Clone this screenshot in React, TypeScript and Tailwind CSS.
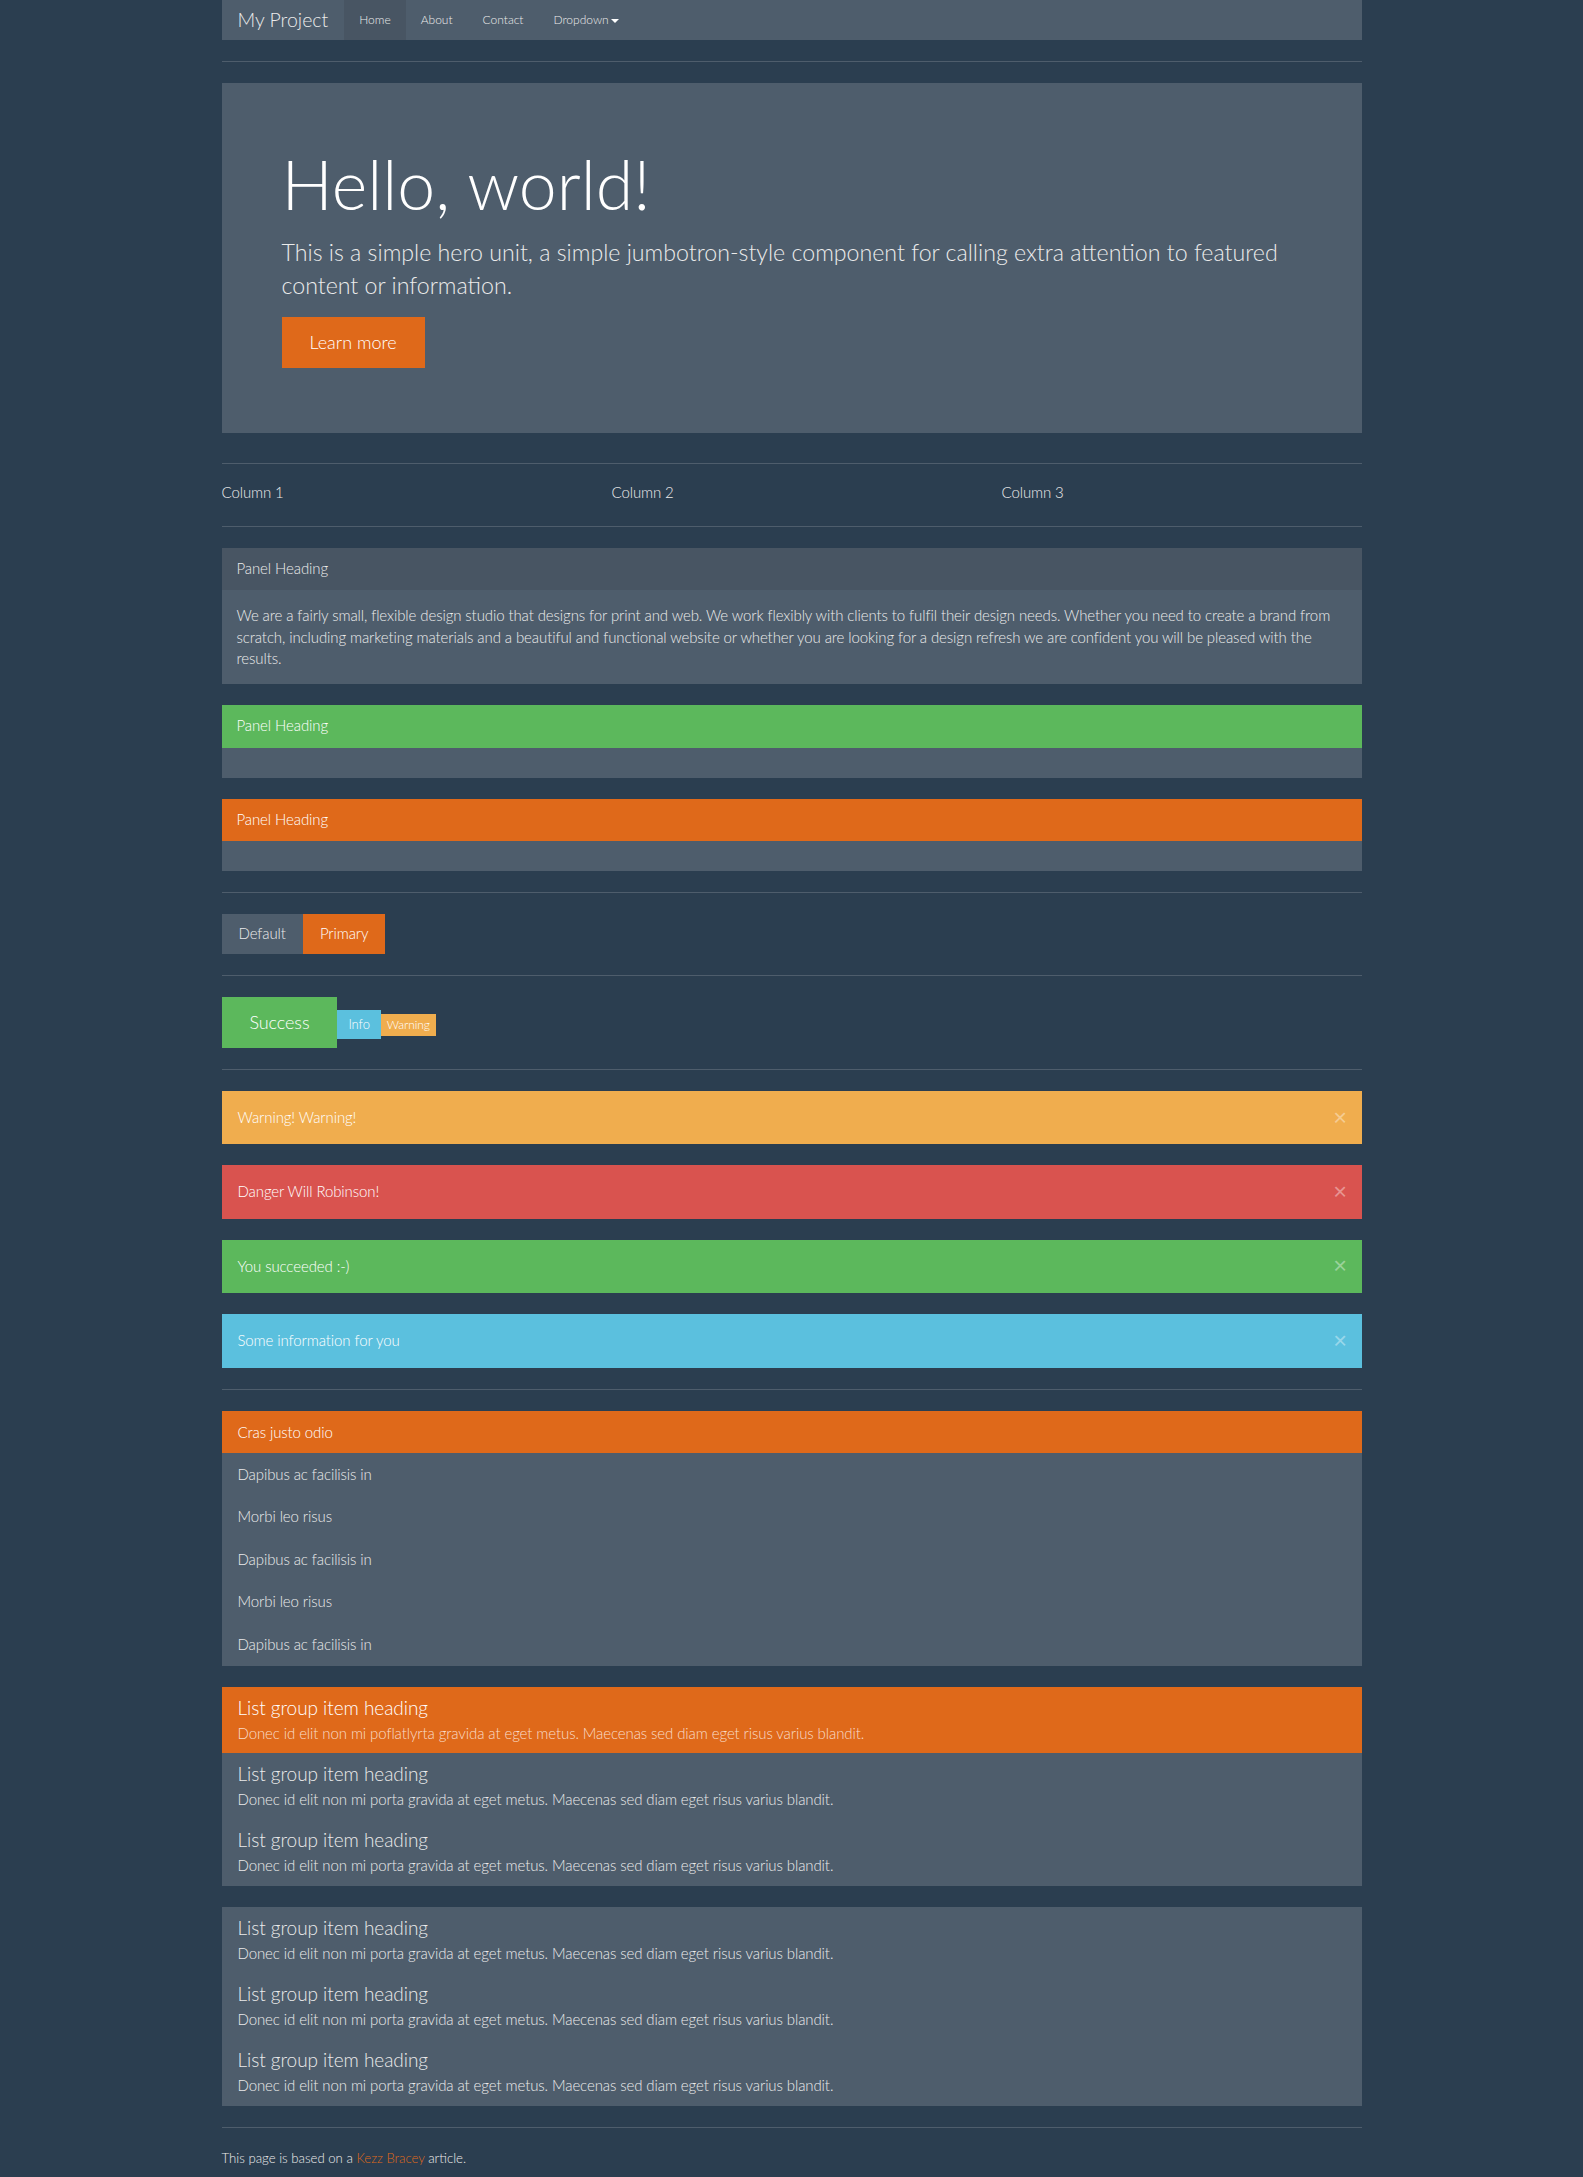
import React from "react";

const Hr = ({ top = "mt-[21px]", bottom = "mb-[21px]" }: { top?: string; bottom?: string }) => (
  <div className={`${top} ${bottom} border-t border-[#4e5d6c]`} />
);

function Panel({ head, headCls, children }: { head: string; headCls: string; children?: React.ReactNode }) {
  return (
    <div className="mb-[21px] bg-[#4e5d6c]">
      <div className={`px-[15px] py-[10px] border-b border-transparent ${headCls}`}>{head}</div>
      <div className="p-[15px]">{children}</div>
    </div>
  );
}

function Alert({ cls, text }: { cls: string; text: string }) {
  return (
    <div className={`mb-[21px] flex items-center justify-between border border-transparent py-[15px] pl-[15px] pr-[14px] text-white ${cls}`}>
      <span>{text}</span>
      <span className="text-[22px] font-bold leading-none text-white/40 -mt-[2px]">×</span>
    </div>
  );
}

function LGItem({ active, text }: { active?: boolean; text: string }) {
  return (
    <div className={`-mb-px border border-transparent px-[15px] pt-[10px] pb-[10px] last:mb-0 ${active ? "bg-[#df691a]" : "bg-[#4e5d6c]"}`}>
      <h4 className={`mb-[5px] text-[19px] leading-[20.5px] tracking-[-0.05px] ${active ? "text-white" : "text-[#ebebeb]"}`}>List group item heading</h4>
      <p className={`leading-[1.3] ${active ? "text-[#f9dcc8]" : "text-[#ebebeb]"}`}>{text}</p>
    </div>
  );
}

const DESC = "Donec id elit non mi porta gravida at eget metus. Maecenas sed diam eget risus varius blandit.";

export default function App() {
  return (
    <div className="min-h-screen bg-[#2b3e50] font-['Lato_Light','Lato',sans-serif] text-[15px] font-light leading-[1.428571] tracking-[-0.1px] text-[#ebebeb]">
      <div className="mx-auto w-[1140px]">
        {/* navbar */}
        <div className="flex h-10 items-stretch bg-[#4e5d6c] tracking-normal">
          <div className="flex items-center px-[16px] text-[19.5px] leading-5 text-[#ebebeb]">My Project</div>
          <div className="flex items-center bg-[#485563] px-[15px] text-[12px]">Home</div>
          <div className="flex items-center px-[15px] text-[12px]">About</div>
          <div className="flex items-center px-[15px] text-[12px]">Contact</div>
          <div className="flex items-center px-[15px] text-[12px]">
            Dropdown
            <span className="ml-[2px] mt-[1px] inline-block h-0 w-0 border-x-[4px] border-t-[4px] border-x-transparent border-t-white" />
          </div>
        </div>
        <Hr />

        {/* jumbotron */}
        <div className="bg-[#4e5d6c] px-[60px] pt-[48px] pb-[50px] tracking-normal">
          <h1 className="mt-[16px] mb-[14.5px] text-[68px] leading-[1.1] text-white">Hello, world!</h1>
          <p className="mb-[15px] text-[23.2px] leading-[1.42] text-[#ebebeb]">
            This is a simple hero unit, a simple jumbotron-style component for calling extra attention to featured content or information.
          </p>
          <p className="mb-[15px]">
            <span className="inline-block border border-transparent bg-[#df691a] px-[27px] py-[12px] text-[18px] leading-[1.4] text-white">Learn more</span>
          </p>
        </div>
        <Hr top="mt-[30px]" bottom="mb-[18px]" />

        {/* columns */}
        <div className="grid grid-cols-3 gap-[30px]">
          <div>Column 1</div>
          <div>Column 2</div>
          <div>Column 3</div>
        </div>
        <Hr top="mt-[22px]" />

        {/* panels */}
        <Panel head="Panel Heading" headCls="bg-[#485563] text-[#ebebeb]">
          <p>
            We are a fairly small, flexible design studio that designs for print and web. We work flexibly with clients to fulfil their design needs. Whether you need to create a brand from scratch, including marketing materials and a beautiful and functional website or whether you are looking for a design refresh we are confident you will be pleased with the results.
          </p>
        </Panel>
        <Panel head="Panel Heading" headCls="bg-[#5cb85c] text-white" />
        <Panel head="Panel Heading" headCls="bg-[#df691a] text-white" />
        <Hr />

        {/* buttons */}
        <div className="flex">
          <span className="border border-transparent bg-[#4e5d6c] px-4 py-2 text-[#ebebeb]">Default</span>
          <span className="border border-transparent bg-[#df691a] px-4 py-2 text-white">Primary</span>
        </div>
        <Hr />
        <div className="flex items-baseline">
          <span className="border border-transparent bg-[#5cb85c] px-[27px] py-[12px] text-[18px] leading-[1.4] text-white">Success</span>
          <span className="border border-transparent bg-[#5bc0de] px-[10px] py-[4px] text-[13px] leading-[1.5] text-white">Info</span>
          <span className="border border-transparent bg-[#f0ad4e] px-[5px] py-[1px] text-[12px] leading-[1.5] text-white">Warning</span>
        </div>
        <Hr />

        {/* alerts */}
        <Alert cls="bg-[#f0ad4e]" text="Warning! Warning!" />
        <Alert cls="bg-[#d9534f]" text="Danger Will Robinson!" />
        <Alert cls="bg-[#5cb85c]" text="You succeeded :-)" />
        <Alert cls="bg-[#5bc0de]" text="Some information for you" />
        <Hr />

        {/* list group simple */}
        <div className="mb-[21px]">
          <div className="-mb-px border border-transparent bg-[#df691a] px-[15px] py-[10px] text-white">Cras justo odio</div>
          {["Dapibus ac facilisis in", "Morbi leo risus", "Dapibus ac facilisis in", "Morbi leo risus", "Dapibus ac facilisis in"].map((t, i) => (
            <div key={i} className="-mb-px border border-transparent bg-[#4e5d6c] px-[15px] py-[10px] last:mb-0">{t}</div>
          ))}
        </div>

        {/* list group headings */}
        <div className="mb-[21px]">
          <LGItem active text="Donec id elit non mi poflatlyrta gravida at eget metus. Maecenas sed diam eget risus varius blandit." />
          <LGItem text={DESC} />
          <LGItem text={DESC} />
        </div>
        <div className="mb-[21px]">
          <LGItem text={DESC} />
          <LGItem text={DESC} />
          <LGItem text={DESC} />
        </div>
        <Hr />

        <p className="pb-[10px] text-[13.2px] tracking-normal">
          This page is based on a <span className="text-[#df691a]">Kezz Bracey</span> article.
        </p>
      </div>
    </div>
  );
}
